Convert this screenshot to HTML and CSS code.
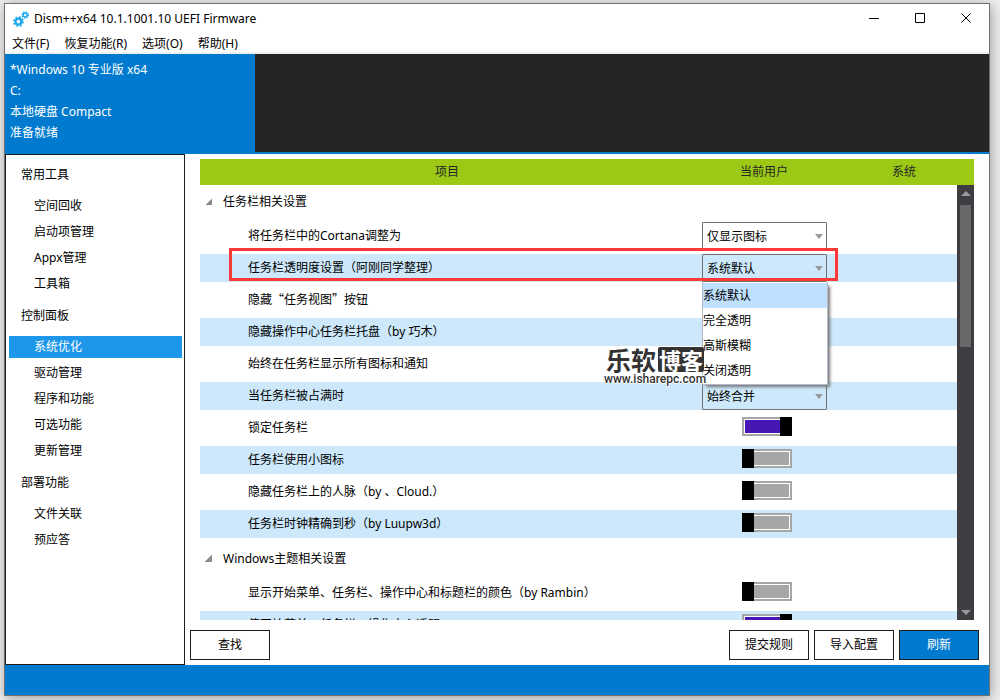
FILE: index.html
```html
<!DOCTYPE html>
<html lang="zh-CN">
<head>
<meta charset="utf-8">
<title>Dism++x64 10.1.1001.10 UEFI Firmware</title>
<link rel="stylesheet" href="styles.css">
</head>
<body>
<div class="window">
  <header class="titlebar">
    <svg class="app-icon" viewBox="0 0 16 16" fill="none" stroke="#1ba8ea" aria-hidden="true">
      <circle cx="5.4" cy="10.6" r="2.9" stroke-width="2.2"/>
      <circle cx="5.4" cy="10.6" r="4.5" stroke-width="1.8" stroke-dasharray="1.8 1.73"/>
      <circle cx="12.2" cy="4" r="2" stroke-width="1.6"/>
      <circle cx="12.2" cy="4" r="3.1" stroke-width="1.4" stroke-dasharray="1.2 1.235"/>
    </svg>
    <h1 class="title">Dism++x64 10.1.1001.10 UEFI Firmware</h1>
    <div class="controls">
      <button class="control" aria-label="最小化"><svg viewBox="0 0 11 11"><path d="M0 5.5h10"/></svg></button>
      <button class="control" aria-label="最大化"><svg viewBox="0 0 11 11"><path d="M.5.5h9v9h-9z"/></svg></button>
      <button class="control" aria-label="关闭"><svg viewBox="0 0 11 11"><path d="M.5.5l9 9M9.5.5l-9 9"/></svg></button>
    </div>
  </header>
  <nav class="menubar">
    <button>文件(F)</button><button>恢复功能(R)</button><button>选项(O)</button><button>帮助(H)</button>
  </nav>
  <section class="images">
    <div class="image-card">
      <p>*Windows 10 专业版 x64</p>
      <p>C:</p>
      <p>本地硬盘 Compact</p>
      <p>准备就绪</p>
    </div>
  </section>
  <div class="body">
    <nav class="sidebar">
      <h2>常用工具</h2>
      <ul>
        <li><a href="#">空间回收</a></li>
        <li><a href="#">启动项管理</a></li>
        <li><a href="#">Appx管理</a></li>
        <li><a href="#">工具箱</a></li>
      </ul>
      <h2>控制面板</h2>
      <ul>
        <li><a href="#" class="active" aria-current="page">系统优化</a></li>
        <li><a href="#">驱动管理</a></li>
        <li><a href="#">程序和功能</a></li>
        <li><a href="#">可选功能</a></li>
        <li><a href="#">更新管理</a></li>
      </ul>
      <h2>部署功能</h2>
      <ul>
        <li><a href="#">文件关联</a></li>
        <li><a href="#">预应答</a></li>
      </ul>
    </nav>
    <main class="content">
      <div class="list">
        <table class="head">
          <tr><th>项目</th><th class="col">当前用户</th><th class="col">系统</th></tr>
        </table>
        <div class="list-area">
          <div class="viewport">
            <table class="rows">
              <colgroup><col><col class="col-user"><col class="col-system"></colgroup>
              <tbody>
                <tr class="group"><th colspan="3"><span class="twisty"></span>任务栏相关设置</th></tr>
                <tr><td><label for="o1">将任务栏中的Cortana调整为</label></td><td><div class="combo"><select id="o1"><option>仅显示图标</option></select><i></i></div></td><td></td></tr>
                <tr><td><label for="o2">任务栏透明度设置（阿刚同学整理）</label></td><td><div class="combo"><select id="o2"><option>系统默认</option><option>完全透明</option><option>高斯模糊</option><option>关闭透明</option></select><i></i>
                  <ul class="popup"><li class="picked">系统默认</li><li>完全透明</li><li>高斯模糊</li><li>关闭透明</li></ul></div></td><td></td></tr>
                <tr><td><label for="o3">隐藏<span class="cjk">“</span>任务视图<span class="cjk">”</span>按钮</label></td><td><input id="o3" class="toggle" type="checkbox"></td><td></td></tr>
                <tr><td><label for="o4">隐藏操作中心任务栏托盘（by 巧木）</label></td><td><input id="o4" class="toggle" type="checkbox"></td><td></td></tr>
                <tr><td><label for="o5">始终在任务栏显示所有图标和通知</label></td><td><input id="o5" class="toggle" type="checkbox"></td><td></td></tr>
                <tr><td><label for="o6">当任务栏被占满时</label></td><td><div class="combo"><select id="o6"><option>始终合并</option></select><i></i></div></td><td></td></tr>
                <tr><td><label for="o7">锁定任务栏</label></td><td><input id="o7" class="toggle" type="checkbox" checked></td><td></td></tr>
                <tr><td><label for="o8">任务栏使用小图标</label></td><td><input id="o8" class="toggle" type="checkbox"></td><td></td></tr>
                <tr><td><label for="o9">隐藏任务栏上的人脉（by 、Cloud.）</label></td><td><input id="o9" class="toggle" type="checkbox"></td><td></td></tr>
                <tr><td><label for="o10">任务栏时钟精确到秒（by Luupw3d）</label></td><td><input id="o10" class="toggle" type="checkbox"></td><td></td></tr>
              </tbody>
              <tbody>
                <tr class="group"><th colspan="3"><span class="twisty"></span>Windows主题相关设置</th></tr>
                <tr><td><label for="o11">显示开始菜单、任务栏、操作中心和标题栏的颜色（by Rambin）</label></td><td><input id="o11" class="toggle" type="checkbox"></td><td></td></tr>
                <tr><td><label for="o12">使开始菜单、任务栏、操作中心透明</label></td><td><input id="o12" class="toggle" type="checkbox" checked></td><td></td></tr>
              </tbody>
            </table>
          </div>
          <div class="scrollbar"><button class="arrow up" aria-label="向上滚动"></button><div class="thumb"></div><button class="arrow down" aria-label="向下滚动"></button></div>
          <div class="marker"></div>
          <div class="watermark"><div class="brand">乐软<b>博客</b></div><div class="site">www.isharepc.com</div></div>
        </div>
      </div>
      <div class="actions">
        <button class="btn find">查找</button>
        <button class="btn">提交规则</button>
        <button class="btn">导入配置</button>
        <button class="btn primary">刷新</button>
      </div>
    </main>
  </div>
  <footer class="statusbar"></footer>
</div>
</body>
</html>
```
FILE: styles.css
```css
* { box-sizing: border-box; }
html { height: 100%; }
body {
  margin: 0;
  height: 100%;
  padding: 3px 10px 4px 4px;
  background: #eeeeee;
  font: 12px/20px "Noto Sans", "Noto Sans CJK SC", sans-serif;
  color: #000;
}
h1, h2, p, ul { margin: 0; padding: 0; font: inherit; }
ul { list-style: none; }
button, select { font: inherit; color: inherit; }
button { border: 0; padding: 0; background: none; }

.window {
  height: 100%;
  display: flex;
  flex-direction: column;
  background: #fff;
  border: 1px solid #707070;
  box-shadow: 1px 2px 12px rgba(0, 0, 0, .35);
}

.titlebar { display: flex; align-items: center; height: 29px; padding-left: 8px; flex: none; }
.app-icon { width: 16px; height: 16px; margin-right: 5px; }
.title { flex: 1; }
.controls { display: flex; height: 100%; }
.control { width: 46px; display: flex; align-items: center; justify-content: center; }
.control svg { width: 11px; height: 11px; fill: none; stroke: #000; }

.menubar {
  display: flex;
  gap: 15px;
  height: 21px;
  padding: 1px 7px 0;
  border-bottom: 2px solid #f0f0f0;
  flex: none;
}
.menubar button { line-height: 20px; height: 20px; }

.images { background: #252525; border-bottom: 2px solid #007acc; height: 100px; flex: none; }
.image-card {
  width: 250px;
  height: 98px;
  padding: 5px;
  background: #007ace;
  color: #fff;
  line-height: 21px;
}

.body { flex: 1; display: flex; min-height: 0; }
.sidebar { width: 180px; padding-top: 1px; border: 1px solid #1e1e1e; flex: none; }
.sidebar h2 { height: 37px; line-height: 38px; padding-left: 15px; }
.sidebar li { height: 26px; padding: 2px 2px 2px 3px; }
.sidebar a { display: block; line-height: 22px; padding-left: 25px; color: inherit; text-decoration: none; }
.sidebar a.active { background: #1e97ea; color: #fff; }

.content { flex: 1; min-width: 0; display: flex; flex-direction: column; padding: 5px 10px 5px 5px; }
.list { flex: 1; min-height: 0; display: flex; flex-direction: column; margin: 0 5px 0 10px; }
table { width: 100%; border-spacing: 0; table-layout: fixed; }
td, th { padding: 0; font-weight: 400; }
.head { background: #9bc916; height: 26px; flex: none; color: #252525; }
.head .col { width: 140px; }

.list-area { flex: 1; min-height: 0; display: flex; position: relative; }
.viewport { flex: 1; overflow: hidden; }
.col-user { width: 140px; }
.col-system { width: 123px; }
.rows td {
  height: 32px;
  border-bottom: 4px solid transparent;
  background-clip: padding-box;
  text-align: center;
  line-height: 27px;
  vertical-align: top;
}
.rows td:first-child { text-align: left; padding-left: 48px; }
.rows tr:nth-child(odd):not(.group) td { background-color: #cce8fa; }
.group th { height: 37px; padding: 0 0 3px 5px; text-align: left; }
.twisty {
  display: inline-block;
  width: 7px;
  height: 7px;
  margin: 0 11px 1px 0;
  background: linear-gradient(135deg, transparent 50%, #8c8c8c 50%);
}
.cjk { font-family: "Noto Sans CJK SC", sans-serif; line-height: 1; }

.combo { position: relative; width: 125px; height: 28px; margin: 0 auto 0 8px; text-align: left; }
.combo select {
  display: block;
  appearance: none;
  width: 100%;
  height: 28px;
  padding: 0 4px 2px;
  border: 1px solid #707070;
  border-radius: 1px;
  background: transparent;
}
.combo i {
  position: absolute;
  right: 4px;
  top: 12px;
  border: 4px solid transparent;
  border-top: 5px solid #999;
  border-bottom: 0;
}
.popup {
  position: absolute;
  z-index: 1;
  top: 28px;
  left: 0;
  width: 126px;
  padding: 1px 0;
  background: #fff;
  border: 1px solid #b8b8cc;
  border-top: 0;
  box-shadow: 3px 3px 3px -1px #777;
  line-height: 25px;
}
.picked { background: #bfe0ff; }

.toggle {
  appearance: none;
  display: block;
  width: 50px;
  height: 19px;
  margin: 3px auto 0 48px;
  border: 2px solid #a6a6a6;
  background: #a6a6a6;
  box-shadow: inset 0 0 0 1px #fff;
  position: relative;
}
.toggle::before {
  content: "";
  position: absolute;
  top: -2px;
  left: -2px;
  width: 12px;
  height: 19px;
  background: #000;
}
.toggle:checked { background: #4617b4; }
.toggle:checked::before { left: auto; right: -2px; }

.scrollbar { width: 17px; background: #3e3e42; display: flex; flex-direction: column; align-items: center; flex: none; }
.arrow { height: 20px; width: 17px; display: flex; align-items: center; justify-content: center; flex: none; }
.arrow::before { content: ""; border: 5px solid transparent; }
.up::before { border-top: 0; border-bottom-color: #999; margin-bottom: 3px; }
.down::before { border-bottom: 0; border-top-color: #999; margin-top: 4px; }
.thumb { width: 11px; height: 142px; background: #686868; margin-bottom: auto; }

.marker {
  position: absolute;
  z-index: 2;
  top: 63px;
  left: 29px;
  right: 136px;
  height: 33px;
  border: 3px solid #ff3838;
  pointer-events: none;
}
.watermark {
  position: absolute;
  z-index: 3;
  top: 162px;
  right: 268px;
  width: 102px;
  color: #333;
  text-align: center;
  text-shadow: 1px 0 #fff, -1px 0 #fff, 0 1px #fff, 0 -1px #fff;
  pointer-events: none;
}
.brand { font: 700 25px/25px "Noto Sans CJK SC", sans-serif; white-space: nowrap; display: flex; justify-content: center; gap: 2px; }
.brand b { background: #333; color: #fff; text-shadow: none; border-radius: 2px; font-size: 22px; font-weight: 700; padding: 0 1px; }
.site { font: 500 12px/14px Roboto, sans-serif; white-space: nowrap; }

.actions { display: flex; gap: 5px; margin-top: 10px; flex: none; }
.btn { width: 80px; height: 30px; border: 1px solid #1e1e1e; background: #fff; }
.find { margin-right: auto; }
.primary { background: #007ace; color: #fff; }

.statusbar { height: 30px; background: #007ace; flex: none; }
```
